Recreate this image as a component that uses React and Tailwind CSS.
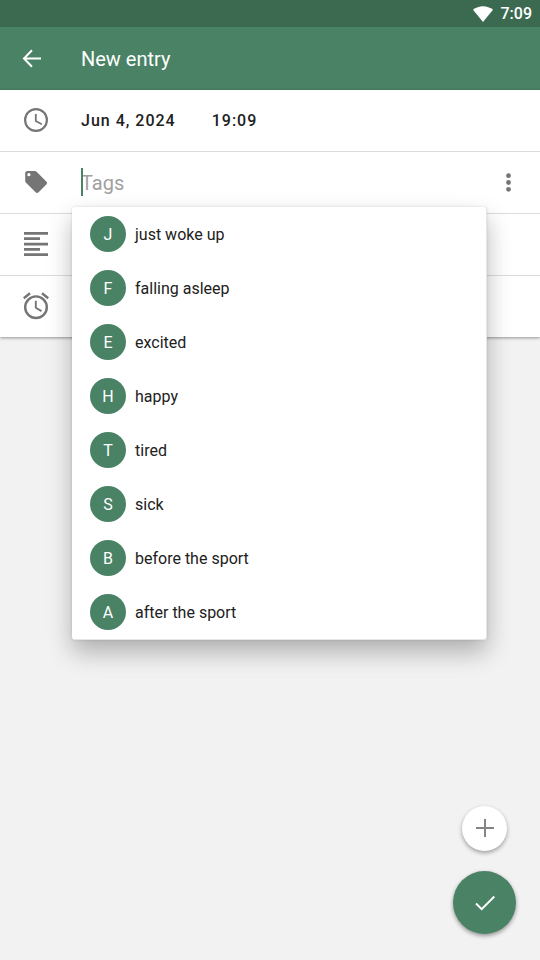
const suggestions = [
  'just woke up',
  'falling asleep',
  'excited',
  'happy',
  'tired',
  'sick',
  'before the sport',
  'after the sport',
];

function ClockIcon() {
  return (
    <svg width="24" height="24" viewBox="0 0 24 24" fill="none" stroke="#757575" aria-hidden="true">
      <circle cx="12" cy="12" r="10.9" strokeWidth="2.2" />
      <path d="M11.8 6v7l6 3.3" strokeWidth="1.8" />
    </svg>
  );
}

function TagIcon() {
  return (
    <svg width="24" height="24" viewBox="0 0 24 24" fill="#757575" aria-hidden="true">
      <path
        fillRule="evenodd"
        d="M22.300 11.500 12.600 1.800C12.200 1.300 11.600 1 11 1H3.300C2.100 1 1.200 2 1.200 3.200v7.700c0 .6.2 1.100.6 1.500l9.800 9.800c.4.4 1 .7 1.500.7s1.100-.3 1.500-.7l7.700-7.700c.4-.4.7-1 .7-1.500 0-.6-.3-1.100-.7-1.500zM4.900 6.300a1.600 1.600 0 1 1 0-3.200 1.600 1.600 0 0 1 0 3.200z"
      />
    </svg>
  );
}

function NotesIcon() {
  return (
    <svg width="24" height="24" viewBox="0 0 24 24" fill="#757575" aria-hidden="true">
      <path d="M0 0h24v2.700H0zM0 5.300h16V8H0zM0 10.700h24v2.700H0zM0 16h16v2.700H0zM0 21.300h24V24H0z" />
    </svg>
  );
}

function AlarmIcon() {
  return (
    <svg width="26" height="28" viewBox="0 0 26 28" fill="none" stroke="#757575" aria-hidden="true">
      <circle cx="13" cy="15.200" r="10.800" strokeWidth="2.400" />
      <path d="M12.800 8.700v7l5.700 3.400" strokeWidth="1.900" />
      <path d="M.800 6.200 7 1.200M25.200 6.200 19 1.200" strokeWidth="2.400" />
    </svg>
  );
}

function IconCell({ children }) {
  return <span className="flex w-[72px] shrink-0 items-center justify-center pb-px">{children}</span>;
}

export default function App() {
  return (
    <div className="flex min-h-screen flex-col bg-[#f2f2f2] font-[Roboto,sans-serif] text-[#212121]">
      <div className="flex h-[27px] items-center justify-end gap-2 bg-[#3b6a51] px-2 text-base font-medium text-white">
        <svg width="20" height="16" viewBox="0 0 20 16" fill="#fff" aria-hidden="true">
          <path d="M0 3.800C5.500-.900 14.500-.900 20 3.800L10 16z" />
        </svg>
        <span>7:09</span>
      </div>

      <header className="flex h-[63px] items-center bg-[#498265] text-white">
        <button type="button" aria-label="Back" className="flex h-full w-[63px] items-center justify-center">
          <svg width="19" height="19" viewBox="0 0 19 19" fill="none" stroke="#fff" strokeWidth="2" aria-hidden="true">
            <path d="M19 9.500H2.500M10 1.300 2 9.500l8 8.200" />
          </svg>
        </button>
        <h1 className="pl-[18px] text-xl">New entry</h1>
      </header>

      <main className="bg-white shadow-[0_1px_3px_rgba(0,0,0,0.4)]">
        <div className="flex h-[62px] items-center border-b border-[#dcdcdc]">
          <IconCell>
            <ClockIcon />
          </IconCell>
          <div className="flex gap-9 pl-[9px] text-base font-medium tracking-[1px]">
            <button type="button">Jun 4, 2024</button>
            <button type="button">19:09</button>
          </div>
        </div>

        <div className="relative flex h-[62px] items-center border-b border-[#dcdcdc]">
          <IconCell>
            <TagIcon />
          </IconCell>
          <div className="relative ml-[9px] flex flex-1">
            <input
              type="text"
              aria-label="Tags"
              placeholder="Tags"
              className="h-[29px] w-full bg-transparent text-xl outline-none placeholder:text-[#a0a0a0]"
            />
            <span className="absolute top-0 bottom-px left-0 w-[2px] bg-[#498265]" />
          </div>
          <button type="button" aria-label="More options" className="flex h-full w-[63px] items-center justify-center">
            <svg width="7" height="19" viewBox="0 0 7 19" fill="#757575" aria-hidden="true">
              <circle cx="3.500" cy="2.700" r="2.400" />
              <circle cx="3.500" cy="9.500" r="2.400" />
              <circle cx="3.500" cy="16.300" r="2.400" />
            </svg>
          </button>

          <ul className="absolute top-[55px] right-[53px] left-[72px] z-10 rounded-[3px] border-r border-b border-[#e6e6e6] bg-white shadow-[0_12px_24px_rgba(0,0,0,0.28),0_0_3px_rgba(0,0,0,0.12)]">
            {suggestions.map((name) => (
              <li key={name}>
                <button type="button" className="flex h-[54px] w-full items-center gap-[9px] px-[18px] text-left text-base">
                  <span className="flex size-9 items-center justify-center rounded-full bg-[#498265] pt-[2px] text-white">
                    {name[0].toUpperCase()}
                  </span>
                  <span className="pt-[2px]">{name}</span>
                </button>
              </li>
            ))}
          </ul>
        </div>

        <div className="flex h-[62px] items-center border-b border-[#dcdcdc]">
          <IconCell>
            <NotesIcon />
          </IconCell>
        </div>
        <div className="flex h-[61px] items-center">
          <IconCell>
            <AlarmIcon />
          </IconCell>
        </div>
      </main>

      <div className="mt-auto flex flex-col items-center gap-5 self-end pr-6 pb-[26px]">
        <button
          type="button"
          aria-label="Add"
          className="flex size-[45px] items-center justify-center rounded-full bg-white pb-px shadow-[0_2px_4px_rgba(0,0,0,0.35)]"
        >
          <svg width="18" height="18" viewBox="0 0 18 18" stroke="#858585" strokeWidth="2" aria-hidden="true">
            <path d="M9 0v18M0 9h18" />
          </svg>
        </button>
        <button
          type="button"
          aria-label="Save"
          className="flex size-[63px] items-center justify-center rounded-full bg-[#498265] shadow-[0_2px_4px_rgba(0,0,0,0.4)]"
        >
          <svg width="20" height="16" viewBox="0 0 20 16" fill="none" stroke="#fff" strokeWidth="2" aria-hidden="true">
            <path d="m1 8.500 5.700 5.700L19.300 1.500" />
          </svg>
        </button>
      </div>
    </div>
  );
}
